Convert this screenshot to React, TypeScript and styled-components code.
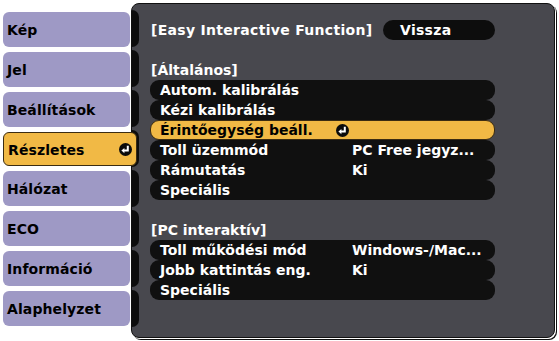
import React from "react";
import styled, { createGlobalStyle } from "styled-components";

const Global = createGlobalStyle`
  html, body { margin: 0; padding: 0; background: #ffffff; }
  body { font-family: "DejaVu Sans", "Liberation Sans", sans-serif; }
`;

const Screen = styled.div`
  width: 559px;
  height: 341px;
  display: flex;
  align-items: flex-start;
  background: #ffffff;
  overflow: hidden;
`;

const Menu = styled.nav`
  width: 127px;
  margin-left: 3px;
  padding-top: 12px;
  display: flex;
  flex-direction: column;
  gap: 5px;
`;

const MenuItem = styled.div<{ $active?: boolean }>`
  position: relative;
  z-index: ${(p) => (p.$active ? 2 : 0)};
  height: ${(p) => (p.$active ? 34 : 35)}px;
  margin-right: ${(p) => (p.$active ? -7 : 0)}px;
  box-sizing: border-box;
  display: flex;
  align-items: center;
  justify-content: space-between;
  padding: 1px 4px 0 4px;
  border-radius: 6px;
  background: ${(p) => (p.$active ? "#f1b945" : "#9e99c5")};
  border: ${(p) => (p.$active ? "1px solid #3b2c12" : "none")};
  color: #000;
  font-weight: bold;
  font-size: 14px;
  letter-spacing: 0.1px;
`;

const Panel = styled.section`
  margin-top: 3px;
  margin-left: 1px;
  width: 424px;
  height: 335px;
  box-sizing: border-box;
  background: #48484e;
  border: 1px solid #111;
  border-radius: 8px;
  box-shadow: 1px 1px 0 0 #fff, 2px 2px 0 0 #111;
  display: flex;
  overflow: hidden;
`;

const Tabs = styled.div`
  width: 7px;
  padding-top: 6px;
  display: flex;
  flex-direction: column;
  gap: 3px;
`;

const Tab = styled.div`
  height: 37px;
  background: #0d0d0d;
  border-radius: 0 8px 8px 0;
`;

const Content = styled.div`
  padding: 16px 0 0 11px;
  display: flex;
  flex-direction: column;
  color: #fff;
  font-weight: bold;
  font-size: 14px;
`;

const TitleRow = styled.div`
  height: 20px;
  display: flex;
  align-items: center;
  margin-left: 1px;
`;

const Title = styled.div`
  width: 232px;
  white-space: nowrap;
  letter-spacing: 0.3px;
`;

const BackButton = styled.div`
  width: 112px;
  height: 20px;
  box-sizing: border-box;
  padding-left: 17px;
  display: flex;
  align-items: center;
  background: #0d0d0d;
  border-radius: 10px;
  letter-spacing: 0.3px;
`;

const Spacer = styled.div`
  height: 20px;
`;

const Header = styled.div`
  height: 20px;
  display: flex;
  align-items: center;
  margin-left: 1px;
`;

const Row = styled.div<{ $active?: boolean }>`
  width: 345px;
  height: 20px;
  box-sizing: border-box;
  display: grid;
  grid-template-columns: 173px 13px 1fr;
  column-gap: 3px;
  align-items: center;
  padding-left: ${(p) => (p.$active ? 9 : 10)}px;
  border-radius: 9px;
  background: ${(p) => (p.$active ? "#f1b945" : "#101010")};
  color: ${(p) => (p.$active ? "#000" : "#fff")};
  border: ${(p) => (p.$active ? "1px solid #3b2c12" : "none")};
  white-space: nowrap;
`;

const Label = styled.span``;
const Value = styled.span``;

const EnterIcon = ({ size = 13 }: { size?: number }) => (
  <svg width={size} height={size} viewBox="0 0 13 13" style={{ display: "block" }}>
    <circle cx="6.5" cy="6.5" r="6.5" fill="#0b0b0b" />
    <path d="M8.8 2.8 V7.6 H4.6" stroke="#fff" strokeWidth="2" fill="none" />
    <path d="M2.4 7.6 L5.4 4.9 L5.4 10.3 Z" fill="#fff" />
  </svg>
);

const menu = ["Kép", "Jel", "Beállítások", "Részletes", "Hálózat", "ECO", "Információ", "Alaphelyzet"];

type RowData = { label: string; value?: string; active?: boolean };

const general: RowData[] = [
  { label: "Autom. kalibrálás" },
  { label: "Kézi kalibrálás" },
  { label: "Érintőegység beáll.", active: true },
  { label: "Toll üzemmód", value: "PC Free jegyz..." },
  { label: "Rámutatás", value: "Ki" },
  { label: "Speciális" },
];

const pc: RowData[] = [
  { label: "Toll működési mód", value: "Windows-/Mac..." },
  { label: "Jobb kattintás eng.", value: "Ki" },
  { label: "Speciális" },
];

const renderRows = (rows: RowData[]) =>
  rows.map((r) => (
    <Row key={r.label} $active={r.active}>
      <Label>{r.label}</Label>
      <span>{r.active ? <EnterIcon /> : null}</span>
      <Value>{r.value ?? ""}</Value>
    </Row>
  ));

export default function App() {
  return (
    <>
      <Global />
      <Screen>
        <Menu>
          {menu.map((m) => (
            <MenuItem key={m} $active={m === "Részletes"}>
              <span>{m}</span>
              {m === "Részletes" ? <EnterIcon /> : null}
            </MenuItem>
          ))}
        </Menu>
        <Panel>
          <Tabs>
            {menu.map((m) => (
              <Tab key={m} />
            ))}
          </Tabs>
          <Content>
            <TitleRow>
              <Title>[Easy Interactive Function]</Title>
              <BackButton>Vissza</BackButton>
            </TitleRow>
            <Spacer />
            <Header>[Általános]</Header>
            {renderRows(general)}
            <Spacer />
            <Header>[PC interaktív]</Header>
            {renderRows(pc)}
          </Content>
        </Panel>
      </Screen>
    </>
  );
}
